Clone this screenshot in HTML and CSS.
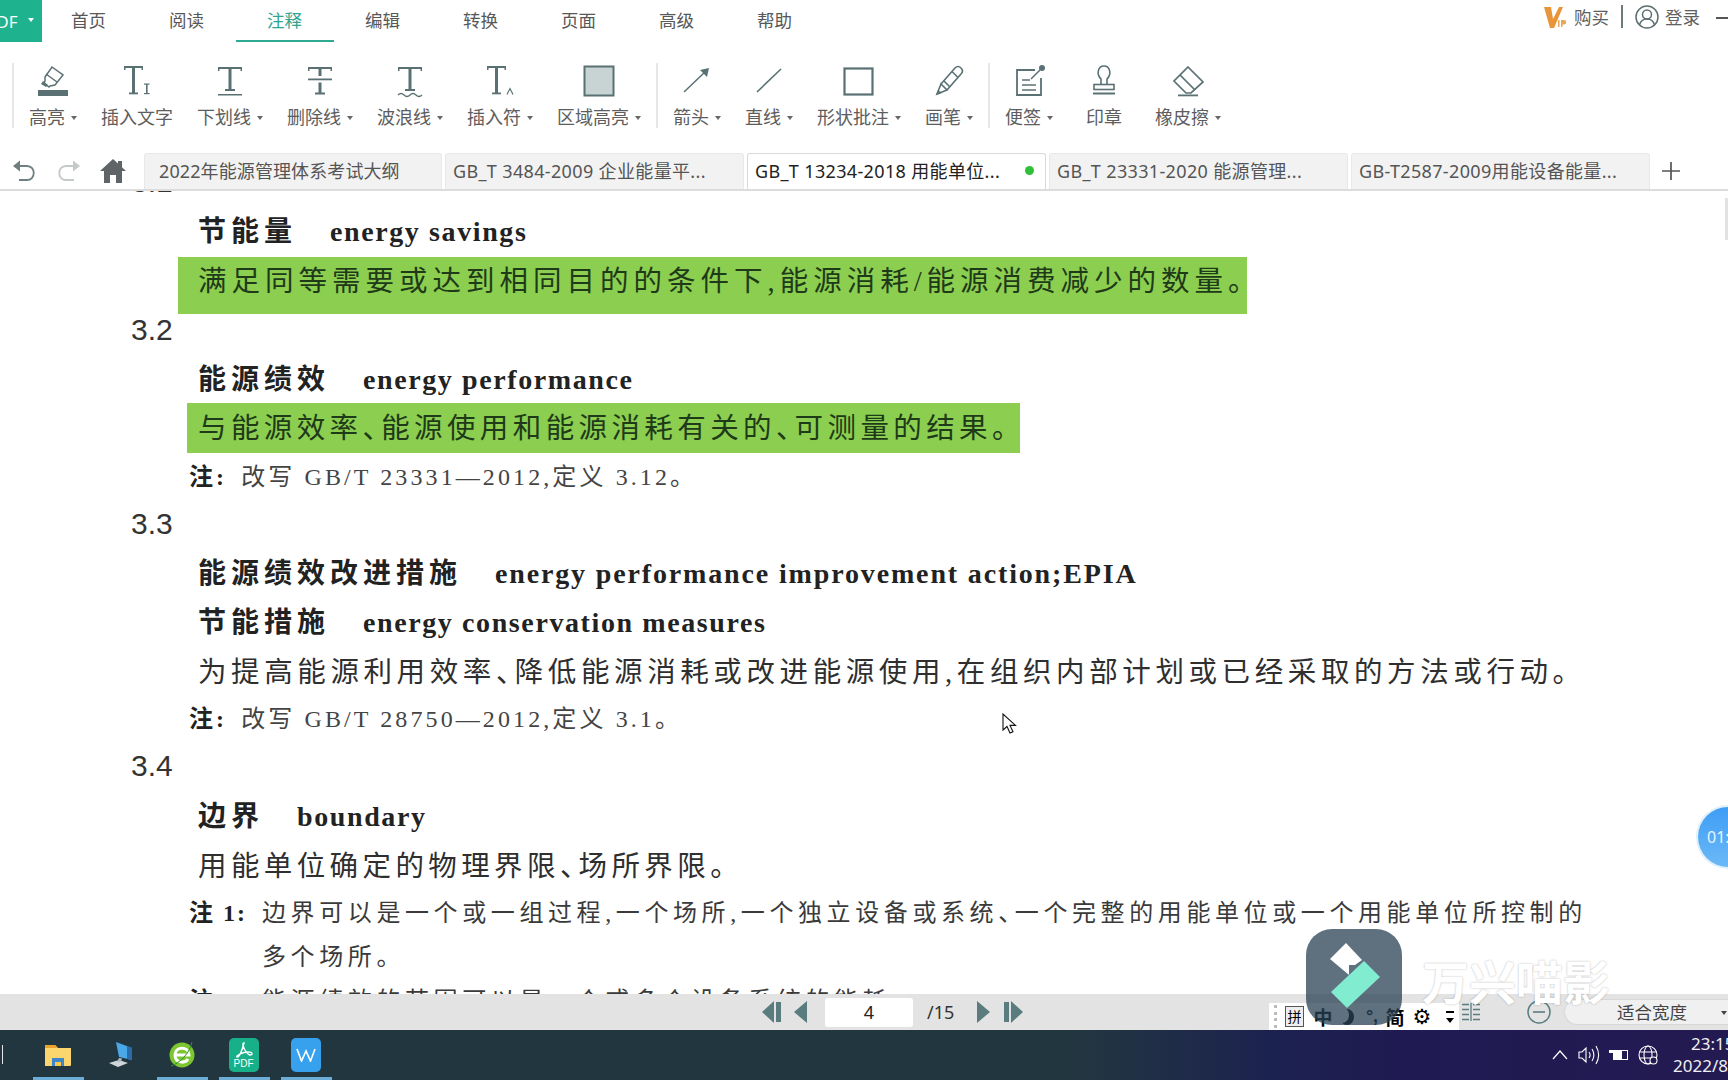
FILE: index.html
```html
<!DOCTYPE html>
<html lang="zh-CN">
<head>
<meta charset="utf-8">
<title>GB_T 13234-2018 用能单位</title>
<link rel="stylesheet" href="styles.css">
</head>
<body>
<div class="app">
  <header class="nav">
    <div class="logo"><span class="logo-text">PDF</span><i class="caret caret-white"></i></div>
    <nav class="menu">
      <a class="menu-item">首页</a><a class="menu-item">阅读</a><a class="menu-item active">注释</a><a class="menu-item">编辑</a><a class="menu-item">转换</a><a class="menu-item">页面</a><a class="menu-item">高级</a><a class="menu-item">帮助</a>
    </nav>
    <div class="account">
      <svg class="vip" width="24" height="24" viewBox="0 0 24 24"><path d="M0 2h7l2 12L15 2h4L10 23H6z" fill="#e8943a"/><path d="M14 15h1.500v7H14zM17 15h3a2.200 2.200 0 0 1 0 4.500h-1.500V22H17z" fill="#e8a65a"/></svg>
      <span class="acct-text">购买</span>
      <span class="acct-div"></span>
      <svg width="24" height="24" viewBox="0 0 24 24" fill="none" stroke="#5c6f72" stroke-width="1.500"><circle cx="12" cy="12" r="11"/><circle cx="12" cy="9.500" r="4.500"/><path d="M4.500 20c1-4 4-6 7.500-6s6.500 2 7.500 6"/></svg>
      <span class="acct-text login">登录</span>
      <span class="win-min"></span>
    </div>
  </header>

  <section class="toolbar">
    <span class="sep sep-first"></span>
    <div class="tool">
      <svg class="ico" viewBox="0 0 40 34" width="40" height="34"><rect x="5" y="26" width="30" height="6" fill="#5a7174"/><g fill="none" stroke="#5a7174" stroke-width="1.500"><path d="M19 3l11 8-8 10-5 1-1 1-5-4 1-2 0-4z"/><path d="M13 10l11 8"/></g><path d="M10 17l5 4-2 2-5-3z" fill="#5a7174"/></svg>
      <div class="tool-label">高亮<i class="caret"></i></div>
    </div>
    <div class="tool">
      <svg class="ico" viewBox="0 0 40 34" width="40" height="34"><g fill="#5a7174"><rect x="7" y="2" width="19" height="2"/><rect x="7" y="2" width="1.500" height="4"/><rect x="24.500" y="2" width="1.500" height="4"/><rect x="15" y="3" width="3" height="27"/><rect x="12" y="28.500" width="9" height="1.800"/><rect x="29" y="20" width="1.600" height="10"/><rect x="27" y="19.500" width="5.500" height="1.200"/><rect x="27" y="29" width="5.500" height="1.200"/></g></svg>
      <div class="tool-label">插入文字</div>
    </div>
    <div class="tool">
      <svg class="ico" viewBox="0 0 40 34" width="40" height="34"><g fill="#5a7174"><rect x="8" y="3" width="24" height="2"/><rect x="8" y="3" width="1.500" height="4"/><rect x="30.500" y="3" width="1.500" height="4"/><rect x="18.500" y="4" width="3" height="22"/><rect x="15" y="25" width="10" height="2"/><rect x="8" y="30" width="24" height="1.500"/></g></svg>
      <div class="tool-label">下划线<i class="caret"></i></div>
    </div>
    <div class="tool">
      <svg class="ico" viewBox="0 0 40 34" width="40" height="34"><g fill="#5a7174"><rect x="8" y="3" width="24" height="2"/><rect x="8" y="3" width="1.500" height="4"/><rect x="30.500" y="3" width="1.500" height="4"/><rect x="18.500" y="4" width="3" height="8"/><rect x="8" y="14.500" width="24" height="1.800"/><rect x="18.500" y="18.500" width="3" height="11"/><rect x="15" y="28.500" width="10" height="2"/></g></svg>
      <div class="tool-label">删除线<i class="caret"></i></div>
    </div>
    <div class="tool">
      <svg class="ico" viewBox="0 0 40 34" width="40" height="34"><g fill="#5a7174"><rect x="8" y="3" width="24" height="2"/><rect x="8" y="3" width="1.500" height="4"/><rect x="30.500" y="3" width="1.500" height="4"/><rect x="18.500" y="4" width="3" height="22"/><rect x="15" y="25" width="10" height="2"/></g><path d="M8 31c2-2 4-2 6 0s4 2 6 0 4-2 6 0 4 2 6 0" fill="none" stroke="#5a7174" stroke-width="1.300"/></svg>
      <div class="tool-label">波浪线<i class="caret"></i></div>
    </div>
    <div class="tool">
      <svg class="ico" viewBox="0 0 40 34" width="40" height="34"><g fill="#5a7174"><rect x="7" y="2" width="19" height="2"/><rect x="7" y="2" width="1.500" height="4"/><rect x="24.500" y="2" width="1.500" height="4"/><rect x="15" y="3" width="3" height="27"/><rect x="12" y="28.500" width="9" height="1.800"/></g><path d="M27 30.500l3-6 3 6" fill="none" stroke="#5a7174" stroke-width="1.200"/></svg>
      <div class="tool-label">插入符<i class="caret"></i></div>
    </div>
    <div class="tool">
      <svg class="ico" viewBox="0 0 40 34" width="40" height="34"><rect x="5.500" y="2.500" width="29" height="29" fill="#c8d3d3" stroke="#5a7174" stroke-width="2"/></svg>
      <div class="tool-label">区域高亮<i class="caret"></i></div>
    </div>
    <span class="sep"></span>
    <div class="tool">
      <svg class="ico" viewBox="0 0 40 34" width="40" height="34"><path d="M7 28L29 7" stroke="#5a7174" stroke-width="1.500"/><path d="M32 4l-9 2 7 7z" fill="#5a7174"/></svg>
      <div class="tool-label">箭头<i class="caret"></i></div>
    </div>
    <div class="tool">
      <svg class="ico" viewBox="0 0 40 34" width="40" height="34"><path d="M8 28L32 5" stroke="#5a7174" stroke-width="1.600"/></svg>
      <div class="tool-label">直线<i class="caret"></i></div>
    </div>
    <div class="tool">
      <svg class="ico" viewBox="0 0 40 34" width="40" height="34"><rect x="5.500" y="4.500" width="28" height="26" fill="none" stroke="#5a7174" stroke-width="2.200"/></svg>
      <div class="tool-label">形状批注<i class="caret"></i></div>
    </div>
    <div class="tool">
      <svg class="ico" viewBox="0 0 40 34" width="40" height="34"><g fill="none" stroke="#5a7174" stroke-width="1.600"><path d="M12 20L26 4c2-2 4-2 6 0s2 4 0 6L18 26"/><path d="M12 20l6 6-10 4z"/><path d="M23 7.500l6 6M15 17l6 6"/></g><path d="M7 31l2-5 4 3z" fill="#5a7174"/></svg>
      <div class="tool-label">画笔<i class="caret"></i></div>
    </div>
    <span class="sep"></span>
    <div class="tool">
      <svg class="ico" viewBox="0 0 40 34" width="40" height="34"><path d="M26 6H8v25h24V14" fill="none" stroke="#5a7174" stroke-width="1.800"/><path d="M13 16h8M13 21h14M13 26h14M22 15l9-9" fill="none" stroke="#5a7174" stroke-width="1.500"/><circle cx="33" cy="4" r="3" fill="#5a7174"/></svg>
      <div class="tool-label">便签<i class="caret"></i></div>
    </div>
    <div class="tool tool-stamp">
      <svg class="ico" viewBox="0 0 40 34" width="40" height="34"><g fill="none" stroke="#5a7174" stroke-width="1.600"><path d="M17 20v-5c-5-5-3-13 3-13s8 8 3 13v5"/><rect x="10" y="20.500" width="20" height="5"/></g><rect x="9" y="28.500" width="22" height="2" fill="#5a7174"/></svg>
      <div class="tool-label">印章</div>
    </div>
    <div class="tool">
      <svg class="ico" viewBox="0 0 40 34" width="40" height="34"><g fill="none" stroke="#5a7174" stroke-width="1.700"><path d="M20 3l15 15-12 11h-5L6 17z"/><path d="M12 11l15 15"/></g><rect x="10" y="30.500" width="20" height="1.800" fill="#5a7174"/></svg>
      <div class="tool-label">橡皮擦<i class="caret"></i></div>
    </div>
  </section>

  <section class="tabbar">
    <div class="tab-tools">
      <svg width="26" height="24" viewBox="0 0 26 24" fill="none" stroke="#6f7f80" stroke-width="1.800"><path d="M3 7h13c9 0 9 14 0 14H8"/><path d="M9 1.500v11L2 7z" fill="#6f7f80" stroke="none"/></svg>
      <svg width="26" height="24" viewBox="0 0 26 24" fill="none" stroke="#c4c9c9" stroke-width="1.800"><path d="M23 7H10c-9 0-9 14 0 14h8"/><path d="M17 1.500v11L24 7z" fill="#c4c9c9" stroke="none"/></svg>
      <svg class="home" width="26" height="24" viewBox="0 0 26 24"><path d="M13 0L0 12h4v12h6v-8h6v8h6V12h4l-4-3.700V2h-4v2.600z" fill="#5f6566"/></svg>
    </div>
    <div class="tab tab-first"><span class="tab-text">2022年能源管理体系考试大纲</span></div>
    <div class="tab"><span class="tab-text">GB_T 3484-2009 企业能量平...</span></div>
    <div class="tab tab-active"><span class="tab-text">GB_T 13234-2018 用能单位...</span><i class="dot"></i></div>
    <div class="tab"><span class="tab-text">GB_T 23331-2020 能源管理...</span></div>
    <div class="tab"><span class="tab-text">GB-T2587-2009用能设备能量...</span></div>
    <div class="tab-plus"><svg width="18" height="18" viewBox="0 0 18 18"><path d="M0 9h18M9 0v18" stroke="#555" stroke-width="1.700"/></svg></div>
  </section>

  <main class="doc">
    <div class="row r49 first num">3.1</div>
    <div class="row r50 term">节能量<span class="en">energy savings</span></div>
    <div class="hl hl-a">满足同等需要或达到相同目的的条件下,能源消耗/能源消费减少的数量。</div>
    <div class="row r32 gap9 num">3.2</div>
    <div class="row r48 term">能源绩效<span class="en">energy performance</span></div>
    <div class="hl hl-b">与能源效率、能源使用和能源消耗有关的、可测量的结果。</div>
    <div class="row r46 note"><b>注:</b>改写 GB/T 23331—2012,定义 3.12。</div>
    <div class="row r49 num">3.3</div>
    <div class="row r50 term">能源绩效改进措施<span class="en en-wide">energy performance improvement action;EPIA</span></div>
    <div class="row r48 term">节能措施<span class="en">energy conservation measures</span></div>
    <div class="row r50 def def-long">为提高能源利用效率、降低能源消耗或改进能源使用,在组织内部计划或已经采取的方法或行动。</div>
    <div class="row r45 note"><b>注:</b>改写 GB/T 28750—2012,定义 3.1。</div>
    <div class="row r50 num">3.4</div>
    <div class="row r49 term">边界<span class="en">boundary</span></div>
    <div class="row r50 def">用能单位确定的物理界限、场所界限。</div>
    <div class="row r44 note note-item"><b class="note-no">注 1:</b><span>边界可以是一个或一组过程,一个场所,一个独立设备或系统、一个完整的用能单位或一个用能单位所控制的</span></div>
    <div class="row r44 note note-item"><b class="note-no"></b><span>多个场所。</span></div>
    <div class="row r44 note note-item"><b class="note-no">注 2:</b><span>能源绩效的范围可以是一个或多个设备系统的能耗</span></div>
    <span class="scroll-thumb"></span>
  </main>

  <footer class="pager">
    <svg class="pg-first" width="20" height="22" viewBox="0 0 20 22"><path d="M12 0v22L0 11z" fill="#5a7c7f"/><rect x="14" y="1" width="5" height="20" fill="#5a7c7f"/></svg>
    <svg class="pg-prev" width="13" height="22" viewBox="0 0 13 22"><path d="M13 0v22L0 11z" fill="#5a7c7f"/></svg>
    <div class="pg-input">4</div>
    <div class="pg-total">/15</div>
    <svg class="pg-next" width="13" height="22" viewBox="0 0 13 22"><path d="M0 0v22l13-11z" fill="#5a7c7f"/></svg>
    <svg class="pg-last" width="20" height="22" viewBox="0 0 20 22"><path d="M8 0v22l12-11z" fill="#5a7c7f"/><rect x="1" y="1" width="5" height="20" fill="#5a7c7f"/></svg>
    <svg class="pg-split" width="18" height="18" viewBox="0 0 18 18"><path d="M0 1.500h7M0 6.500h7M0 11.500h7M0 16.500h7M11 1.500h7M11 6.500h7M11 11.500h7M11 16.500h7M9 0v18" stroke="#5a7c7f" stroke-width="1.300"/></svg>
    <svg class="pg-minus" width="24" height="24" viewBox="0 0 24 24" fill="none" stroke="#5a7c7f"><circle cx="12" cy="12" r="11" stroke-width="1.500"/><path d="M6 12h12" stroke-width="1.600"/></svg>
    <div class="pg-select"><span>适合宽度</span><i class="caret caret-dark"></i></div>
  </footer>

  <footer class="taskbar">
    <span class="start"></span>
    <div class="task on">
      <svg width="28" height="24" viewBox="0 0 28 24"><path d="M1 2h10l3 3h13v17a1 1 0 0 1-1 1H1z" fill="#fbd56d"/><path d="M1 2h10l3 3H1z" fill="#eaa32c"/><path d="M8 23v-8h12v8h-3v-4h-6v4z" fill="#3f86c8"/><rect x="11" y="19" width="6" height="4" fill="#f6c84e"/></svg>
    </div>
    <div class="task">
      <svg width="30" height="30" viewBox="0 0 30 30"><path d="M11 2l16 6v12l-13-3z" fill="#4aa7e8"/><path d="M22 6l5 2v12l-5-1z" fill="#2b6ca8"/><path d="M4 23l10-3 9 3-10 4z" fill="#cfd6da"/><path d="M14 18l3 .5-1 3-4 .5z" fill="#aeb8be"/></svg>
    </div>
    <div class="task on">
      <svg width="28" height="32" viewBox="0 0 28 32"><circle cx="14" cy="16" r="12.500" fill="#7cc62f"/><path d="M7 16h14c0-9-14-9-14 0 0 8 10 9 13 4" fill="none" stroke="#fff" stroke-width="3"/><path d="M3 27C12 24 22 14 24 3" fill="none" stroke="#2f8f2a" stroke-width="1"/></svg>
    </div>
    <div class="task on">
      <div class="app-pdf"><svg width="18" height="16" viewBox="0 0 18 16" fill="none" stroke="#fff" stroke-width="1.400"><path d="M9 1c-2 0-1 4 1.500 8S16 14 17 12c.6-2-4-2.500-8-1.500S1 14 2 15c2 1 5-6 7-14z"/></svg><span>PDF</span></div>
    </div>
    <div class="task on">
      <div class="app-w"><svg width="20" height="14" viewBox="0 0 20 14" fill="none" stroke="#fff" stroke-width="1.600"><path d="M1 1l4.500 12L10 3l4.500 10L19 1"/></svg></div>
    </div>
    <div class="tray">
      <svg width="18" height="12" viewBox="0 0 18 12" fill="none" stroke="#fff" stroke-width="1.200"><path d="M2 10l7-8 7 8"/></svg>
      <svg width="22" height="20" viewBox="0 0 22 20" fill="none" stroke="#fff" stroke-width="1.100"><path d="M1 7h3l4-4v14l-4-4H1z"/><path d="M11 7c1.500 2 1.500 4 0 6M14 4c2.500 4 2.500 8 0 12M18 1c3.500 6 3.500 12 0 18"/></svg>
      <svg width="20" height="14" viewBox="0 0 20 14"><rect x="4.500" y="2.500" width="14" height="9" fill="none" stroke="#fff"/><rect x="5" y="3" width="8" height="8" fill="#fff"/><path d="M0 2h4v3H0z" fill="#fff"/></svg>
      <svg width="20" height="20" viewBox="0 0 20 20" fill="none" stroke="#fff" stroke-width="1.100"><circle cx="10" cy="10" r="9"/><ellipse cx="10" cy="10" rx="4" ry="9"/><path d="M1 7h18M1 13h18"/><circle cx="15.500" cy="15.500" r="3.500" fill="#231a52"/></svg>
      <div class="clock"><div class="clock-time">23:15</div><div class="clock-date">2022/8/16</div></div>
    </div>
  </footer>
</div>

<div class="ime"><span class="ime-grip"></span><span class="ime-box">拼</span><span class="ime-zh">中</span><span class="ime-moon"></span><span class="ime-dots">°,</span><span class="ime-zh">简</span><span class="ime-gear">⚙</span><span class="ime-more"></span></div>
<div class="wm-text">万兴喵影</div>
<div class="wm-logo"><svg width="96" height="96" viewBox="0 0 96 96"><path d="M40 14l16 17-7 5-6 0 0 10-19-16z" fill="#fff"/><path d="M58 32l16 16-33 31-16-16z" fill="#82ecd0"/></svg></div>
<div class="timer">01:</div>
<svg class="cursor" width="16" height="22" viewBox="0 0 16 22"><path d="M1 1v16l4-3.500 3 6.500 3-1.300-3-6.300h5.500z" fill="#fff" stroke="#111" stroke-width="1.100"/></svg>
</body>
</html>
```

FILE: styles.css
```css
* { box-sizing: border-box; }
html, body { margin: 0; height: 100%; }
body {
  width: 1728px; height: 1080px; overflow: hidden; position: relative; background: #fff;
  font-family: "Noto Sans", "Noto Sans CJK SC", sans-serif; color: #555;
}
.app { display: flex; flex-direction: column; height: 1080px; width: 1728px; overflow: hidden; }

.caret { display: inline-block; width: 0; height: 0; margin-left: 6px; border: 3.500px solid transparent; border-top: 4px solid #666; border-bottom: 0; vertical-align: middle; position: relative; top: -1px; }
.caret-white { border-top-color: #fff; }
.caret-dark { border-top-color: #444; }

/* top menu */
.nav { height: 42px; display: flex; flex: none; }
.logo { width: 42px; height: 42px; background: #1eb38e; color: #fff; overflow: hidden; display: flex; align-items: center; font-size: 17px; white-space: nowrap; flex: none; }
.logo-text { margin-left: -14px; font-family: "Noto Sans", sans-serif; }
.logo .caret { margin-left: 10px; }
.menu { display: flex; margin-left: -2.500px; }
.menu-item { width: 98px; height: 42px; line-height: 41px; text-align: center; font-size: 17.500px; color: #585858; }
.menu-item.active { color: #2fa58f; border-bottom: 2px solid #2eab92; }
.account { margin-left: auto; display: flex; align-items: flex-start; padding-top: 5px; }
.vip { margin-right: 6px; }
.acct-text { font-size: 17.500px; line-height: 24px; color: #606060; }
.acct-div { width: 2px; height: 23px; background: #6b7b7c; margin: 0 12px 0 12px; }
.login { margin-left: 6px; }
.win-min { width: 12px; height: 1.500px; background: #555; margin: 12px 0 0 16px; }

/* ribbon */
.toolbar { height: 108px; flex: none; display: flex; align-items: flex-start; padding: 21px 0 0 12px; gap: 24px; }
.sep { width: 2px; height: 65px; background: #e6e8e8; margin: 0 -9px; flex: none; }
.sep-first { margin: 0 -9px 0 0; }
.tool { display: flex; flex-direction: column; align-items: center; flex: none; }
.ico { display: block; flex: none; margin-top: 1px; }
.tool-label { height: 24px; line-height: 24px; margin-top: 7px; font-size: 18px; color: #5d5d5d; white-space: nowrap; }
.tool-stamp { min-width: 54px; }

/* tabs */
.tabbar { height: 41px; flex: none; display: flex; align-items: flex-end; padding-top: 3px; gap: 3px; border-bottom: 2px solid #dcdcdc; }
.tab-tools { width: 141px; height: 36px; display: flex; align-items: center; padding-left: 11px; gap: 19px; flex: none; }
.home { margin-left: -1px; }
.tab { width: 299px; height: 36px; background: #f2f2f2; border: 1px solid #e8e8e8; border-bottom: 0; border-radius: 3px 3px 0 0; display: flex; align-items: center; padding: 0 0 3px 7px; font-size: 18px; letter-spacing: .35px; color: #555; white-space: nowrap; flex: none; }
.tab-first { width: 298px; padding-left: 14px; letter-spacing: .1px; }
.tab-active { background: #fff; border-color: #d9d9d9; color: #222; }
.dot { width: 9px; height: 9px; border-radius: 50%; background: #2fc03a; margin-left: auto; margin-right: 11px; }
.tab-plus { margin-left: 9px; height: 36px; display: flex; align-items: center; }

/* document */
.doc { height: 803px; flex: none; overflow: hidden; position: relative; font-family: "Liberation Serif", "Noto Sans CJK SC", serif; color: #2a2a2a; font-feature-settings: "halt"; white-space: nowrap; }
.row { display: block; }
.first { margin-top: -34px; }
.gap9 { margin-bottom: 9px; }
.r32 { height: 32px; line-height: 32px; }
.r44 { height: 44px; line-height: 44px; }
.r45 { height: 45px; line-height: 45px; }
.r46 { height: 46px; line-height: 46px; }
.r48 { height: 48px; line-height: 48px; }
.r49 { height: 49px; line-height: 49px; }
.r50 { height: 50px; line-height: 50px; }
.num { padding-left: 131px; font-family: "Liberation Sans", sans-serif; font-size: 30px; color: #333; }
.term { padding: 1px 0 0 198px; font-size: 28px; font-weight: 700; letter-spacing: 5px; color: #222; }
.en { margin-left: 33px; letter-spacing: 1.600px; }
.en-wide { letter-spacing: 1.850px; }
.def, .hl { font-size: 28.500px; letter-spacing: 4.400px; color: #2f2f2f; }
.def { padding: 2px 0 0 198px; }
.def-long { letter-spacing: 4.600px; }
.hl { background: #8bce50; color: #1e3a18; }
.hl-a { margin: 1px 0 0 178px; width: 1069px; height: 57px; line-height: 50px; padding-left: 20px; letter-spacing: 5px; }
.hl-b { margin-left: 187px; width: 833px; height: 50px; line-height: 50px; padding: 1px 0 0 11px; }
.note { padding: 1px 0 0 189px; font-size: 24px; letter-spacing: 3.100px; color: #444; }
.note b { color: #222; margin-right: 14px; }
.note-item { display: flex; }
.note .note-no { width: 73px; margin: 0; letter-spacing: 2px; flex: none; }
.note-item span { letter-spacing: 4.600px; color: #3a3a3a; }
.scroll-thumb { position: absolute; right: 0; top: 7px; width: 3px; height: 42px; background: #e2e2e2; }

/* pager */
.pager { height: 36px; flex: none; background: #e3e3e3; display: flex; align-items: center; padding-left: 762px; overflow: hidden; }
.pager > * { flex: none; }
.pg-prev { margin-left: 12px; }
.pg-input { width: 88px; height: 29px; margin-left: 18px; background: #fff; border-radius: 3px; text-align: center; line-height: 28px; font-size: 18px; color: #222; }
.pg-total { width: 50px; margin-left: 14px; font-size: 18px; color: #333; }
.pg-last { margin-left: 13px; }
.pg-split { margin-left: 439px; }
.pg-minus { margin-left: 47px; }
.pg-select { margin-left: 13px; width: 200px; height: 26px; background: #f0f0f0; border: 1px solid #d8d8d8; border-right: 0; border-radius: 13px 0 0 13px; font-size: 17.500px; line-height: 24px; color: #444; padding-left: 52px; white-space: nowrap; }
.pg-select .caret { margin-left: 34px; }

/* taskbar */
.taskbar { height: 50px; flex: none; display: flex; align-items: center; padding-left: 26.500px; position: relative; background: linear-gradient(90deg, #223640 0, #223640 1080px, #1c2150 1280px, #1f1b52 1400px, #241a52 100%); }
.start { position: absolute; left: 2px; top: 15px; width: 1px; height: 19px; background: #e8e8e8; }
.task { width: 62px; height: 50px; display: flex; align-items: center; justify-content: center; position: relative; flex: none; }
.task.on::after { content: ""; position: absolute; left: 6px; right: 5px; bottom: 0; height: 3px; background: #6cadd8; }
.app-pdf, .app-w { width: 30px; height: 34px; border-radius: 5px; display: flex; flex-direction: column; align-items: center; justify-content: center; }
.app-pdf { background: #18b088; color: #fff; font-size: 10px; line-height: 11px; }
.app-pdf span { font-family: "Liberation Sans", sans-serif; }
.app-w { background: #38a1ee; }
.tray { position: absolute; left: 1551px; top: 0; height: 50px; display: flex; align-items: center; gap: 9px; color: #fff; }
.tray svg { flex: none; }
.clock { margin-left: 6px; font-size: 17px; line-height: 22px; white-space: nowrap; color: #f0f0f0; }
.clock-time { padding-left: 18px; }

/* floating overlays */
.ime { position: absolute; left: 1269px; top: 1003px; width: 190px; height: 27px; background: #fff; display: flex; align-items: center; color: #000; font-size: 19px; font-weight: 700; font-family: "Noto Sans CJK SC", sans-serif; }
.ime-grip { width: 3px; height: 23px; margin: 0 8px 0 5px; border-left: 3px dotted #bbb; }
.ime-box { width: 19px; height: 21px; border: 1px solid #555; background: #eee; font-size: 14px; line-height: 19px; text-align: center; font-weight: 400; margin-right: 8px; }
.ime-zh { width: 22px; text-align: center; }
.ime-moon { width: 14px; height: 16px; margin-left: 6px; border-radius: 50%; box-shadow: inset -5px -2px 0 0 #000; }
.ime-dots { width: 24px; margin-left: 6px; text-align: center; font-size: 18px; font-family: "Liberation Sans", sans-serif; }
.ime-gear { width: 22px; margin-left: 5px; text-align: center; font-family: "DejaVu Sans", sans-serif; font-size: 21px; }
.ime-more { margin-left: 13px; width: 8px; height: 12px; position: relative; border-top: 2px solid #000; }
.ime-more::after { content: ""; position: absolute; left: 0; bottom: 0; border: 4px solid transparent; border-top: 5px solid #000; border-bottom: 0; }
.wm-logo { position: absolute; left: 1306px; top: 929px; width: 96px; height: 96px; border-radius: 26px; background: rgba(42, 66, 84, .75); }
.wm-text { position: absolute; left: 1422px; top: 947px; font-family: "Noto Sans CJK SC", sans-serif; font-size: 47px; line-height: 66px; font-weight: 700; color: #fff; text-shadow: 0 0 2px rgba(0, 0, 0, .3); white-space: nowrap; }
.timer { position: absolute; left: 1698px; top: 807px; width: 60px; height: 60px; border-radius: 50%; background: linear-gradient(180deg, #3d9df4, #6cb9f8); box-shadow: 0 0 0 2px #dff0fb; color: #e8f5ff; font-size: 16px; line-height: 60px; padding-left: 9px; white-space: nowrap; overflow: hidden; }
.cursor { position: absolute; left: 1002px; top: 713px; }
```
